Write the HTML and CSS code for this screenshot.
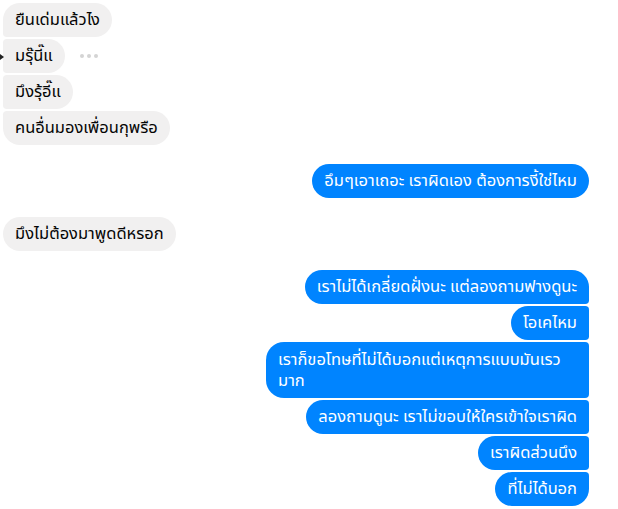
FILE: index.html
```html
<!DOCTYPE html>
<html lang="th">
<head>
<meta charset="utf-8">
<link rel="stylesheet" href="styles.css">
</head>
<body>
<div class="chat">
  <div class="group in">
    <div class="row"><div class="bubble">ยืนเด่มแล้วไง</div></div>
    <div class="row"><span class="pointer"></span><div class="bubble">มรุ๊นี๊แ</div><span class="dots"><i></i><i></i><i></i></span></div>
    <div class="row"><div class="bubble">มึงรุ้อี๊แ</div></div>
    <div class="row"><div class="bubble">คนอื่นมองเพื่อนกุพรือ</div></div>
  </div>
  <div class="group out single">
    <div class="row"><div class="bubble">อึมๆเอาเถอะ เราผิดเอง ต้องการงี้ใช่ไหม</div></div>
  </div>
  <div class="group in single">
    <div class="row"><div class="bubble">มึงไม่ต้องมาพูดดีหรอก</div></div>
  </div>
  <div class="group out">
    <div class="row"><div class="bubble">เราไม่ได้เกลี่ยดฝั่งนะ แต่ลองถามฟางดูนะ</div></div>
    <div class="row"><div class="bubble">โอเคไหม</div></div>
    <div class="row"><div class="bubble wide">เราก็ขอโทษที่ไม่ได้บอกแต่เหตุการแบบมันเรว มาก</div></div>
    <div class="row"><div class="bubble">ลองถามดูนะ เราไม่ขอบให้ใครเข้าใจเราผิด</div></div>
    <div class="row"><div class="bubble">เราผิดส่วนนึง</div></div>
    <div class="row"><div class="bubble">ที่ไม่ได้บอก</div></div>
  </div>
</div>
</body>
</html>
```
FILE: styles.css
```css
html, body {
  margin: 0;
  padding: 0;
  background: #ffffff;
}
body {
  font-family: "Noto Sans Thai", "Noto Sans", "DejaVu Sans", sans-serif;
  font-size: 16.5px;
}
.chat {
  width: 589px;
  padding: 3px 0 0 3px;
  box-sizing: border-box;
  display: flex;
  flex-direction: column;
  gap: 19px;
}
.group {
  display: flex;
  flex-direction: column;
  gap: 2px;
}
.row {
  display: flex;
  align-items: center;
  position: relative;
}
.out .row {
  justify-content: flex-end;
}
.bubble {
  min-height: 34px;
  box-sizing: border-box;
  padding: 7px 12px;
  line-height: 20px;
  border-radius: 18px;
}
.in .bubble {
  background: #f1f0f0;
  color: #050505;
  border-top-left-radius: 4px;
  border-bottom-left-radius: 4px;
}
.in .row:first-child .bubble { border-top-left-radius: 18px; }
.in .row:last-child .bubble { border-bottom-left-radius: 18px; }
.out .bubble {
  background: #0084ff;
  color: #ffffff;
  border-top-right-radius: 4px;
  border-bottom-right-radius: 4px;
}
.out .row:first-child .bubble { border-top-right-radius: 18px; }
.out .row:last-child .bubble { border-bottom-right-radius: 18px; }
.bubble.wide {
  max-width: 323px;
  line-height: 21px;
}
.pointer {
  position: absolute;
  left: -3px;
  top: 15px;
  width: 0;
  height: 0;
  border-top: 3px solid transparent;
  border-bottom: 3px solid transparent;
  border-left: 4px solid #222;
}
.dots {
  display: flex;
  gap: 3px;
  margin-left: 15px;
}
.dots i {
  width: 4px;
  height: 4px;
  border-radius: 50%;
  background: #d4d4d4;
}
```
